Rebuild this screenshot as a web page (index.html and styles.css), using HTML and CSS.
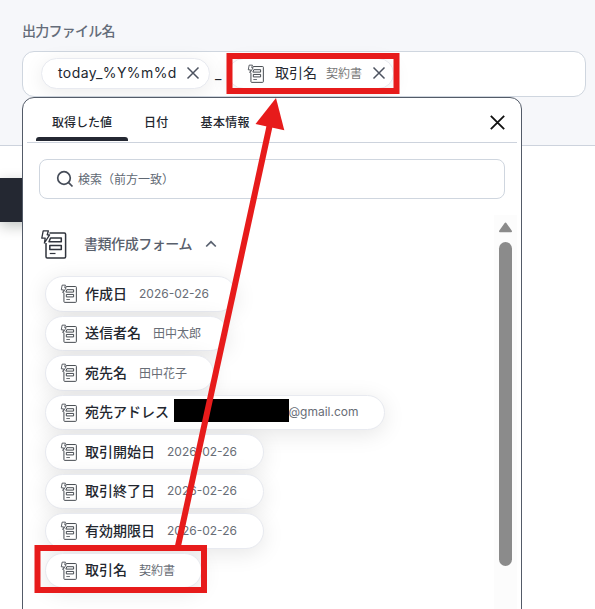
FILE: index.html
```html
<!DOCTYPE html>
<html lang="ja">
<head>
<meta charset="utf-8">
<title>出力ファイル名</title>
<link rel="stylesheet" href="styles.css">
</head>
<body>
<svg class="defs" aria-hidden="true">
  <symbol id="form" viewBox="0 0 28 30">
    <g fill="none" stroke="currentColor" stroke-width="1.5" stroke-linejoin="round">
      <path d="M9.5 4H24.4Q25.6 4 25.6 5.2V27.8Q25.6 29 24.4 29H7.2Q6 29 6 27.8V14"/>
      <path d="M3.2 1.8H8.4L7.2 5.800H9.6L4.4 14L5.200 9.200H1.8Z" stroke-width="1.3"/>
      <path d="M10.5 9H21.3V12.8H9ZM9.8 16.5H21.3V20.4H9.8Z"/>
      <path d="M9.8 24.5H15.5" stroke-width="1.2"/>
    </g>
  </symbol>
  <symbol id="cross" viewBox="0 0 14 14"><path d="M1.5 1.5L12.5 12.5M12.5 1.5L1.5 12.5" fill="none" stroke="currentColor" stroke-width="1.5"/></symbol>
</svg>
<main class="page">
  <section class="top">
    <div class="field-label">出力ファイル名</div>
    <div class="field">
      <div class="chip chip-date"><span>today_%Y%m%d</span><svg class="x"><use href="#cross"/></svg></div>
      <span class="sep">_</span>
      <div class="chip chip-deal"><svg class="icon"><use href="#form"/></svg><span class="chip-name">取引名</span><span class="chip-value">契約書</span><svg class="x"><use href="#cross"/></svg></div>
    </div>
  </section>
  <div class="button"></div>

  <div class="popup">
    <header class="tabs">
      <div class="tab active">取得した値</div>
      <div class="tab">日付</div>
      <div class="tab">基本情報</div>
      <svg class="close"><use href="#cross"/></svg>
    </header>
    <div class="search">
      <svg class="glass" viewBox="0 0 18 18"><circle cx="8" cy="8" r="6.3"/><path d="M12.6 12.6L16.5 16.5"/></svg>
      <span>検索（前方一致）</span>
    </div>
    <div class="body">
      <div class="list">
        <div class="group">
          <svg class="group-icon"><use href="#form"/></svg>
          <span>書類作成フォーム</span>
          <svg class="chevron" viewBox="0 0 12 8"><path d="M1.2 6.5L6 1.8L10.8 6.5"/></svg>
        </div>
        <div class="pill"><svg class="icon"><use href="#form"/></svg><b>作成日</b><span>2026-02-26</span></div>
        <div class="pill"><svg class="icon"><use href="#form"/></svg><b>送信者名</b><span>田中太郎</span></div>
        <div class="pill"><svg class="icon"><use href="#form"/></svg><b>宛先名</b><span>田中花子</span></div>
        <div class="pill mail"><svg class="icon"><use href="#form"/></svg><b>宛先アドレス</b><i class="mask"></i><span>@gmail.com</span></div>
        <div class="pill"><svg class="icon"><use href="#form"/></svg><b>取引開始日</b><span>2026-02-26</span></div>
        <div class="pill"><svg class="icon"><use href="#form"/></svg><b>取引終了日</b><span>2026-02-26</span></div>
        <div class="pill"><svg class="icon"><use href="#form"/></svg><b>有効期限日</b><span>2026-02-26</span></div>
        <div class="pill"><svg class="icon"><use href="#form"/></svg><b>取引名</b><span>契約書</span></div>
      </div>
      <div class="scroll">
        <svg class="up" viewBox="0 0 15 11"><path d="M7.5 1.5L13 9.3H2Z"/></svg>
        <div class="thumb"></div>
      </div>
    </div>
  </div>

  <svg class="marks" viewBox="0 0 595 609">
    <rect x="229.5" y="56" width="167" height="35"/>
    <rect x="37.5" y="548" width="166.5" height="42"/>
    <path d="M178 546L270 124"/>
    <path class="head" d="M276 98L284.3 130.3L255.5 124Z"/>
  </svg>
</main>
</body>
</html>
```
FILE: styles.css
```css
* { box-sizing: border-box; }
body {
  margin: 0;
  background: #fff;
  color: #23272f;
  font-family: Inter, "Noto Sans CJK JP", sans-serif;
}
svg { display: block; flex: none; }
.defs { position: absolute; width: 0; height: 0; }
.page { position: relative; height: 609px; overflow: hidden; }

.top {
  height: 146px;
  padding: 20px 9px 0 22px;
  background: #f6f7fa;
  border-bottom: 1px solid #cdd3dd;
}
.field-label {
  height: 31px;
  line-height: 21px;
  font-size: 14px;
  letter-spacing: -0.75px;
  font-weight: 500;
  color: #646c79;
}
.field {
  display: flex;
  align-items: center;
  height: 46px;
  padding: 0 18px 2px;
  background: #fff;
  border: 1px solid #cfd6df;
  border-radius: 12px;
}
.chip {
  display: flex;
  align-items: center;
  height: 31px;
  background: #fff;
  border: 1px solid #e8eaf0;
  border-radius: 16px;
  box-shadow: 0 4px 20px rgba(0, 0, 0, 0.08);
  font-size: 14px;
  white-space: nowrap;
}
.chip span { margin-bottom: 2px; }
.chip-date { width: 169px; padding-left: 16px; letter-spacing: 0.42px; }
.chip-date .x { margin: 0 9px 0 auto; }
.sep { width: 18px; padding-left: 5px; font-size: 14px; }
.chip-deal { width: 166px; padding-left: 18px; }
.chip-deal .chip-name { margin-left: 10px; }
.chip-deal .chip-value { margin-left: 9px; font-size: 12px; color: #7a7a7a; }
.chip-deal .x { margin-left: 10px; }
.x { width: 14px; height: 14px; color: #4d5360; }
.icon { width: 18px; height: 19px; color: #3c4148; }

.button {
  width: 60px;
  height: 44px;
  margin-top: 32px;
  background: #242832;
  box-shadow: 0 4px 14px rgba(0, 20, 10, 0.25);
}

.popup {
  position: absolute;
  left: 22px;
  top: 97px;
  width: 500px;
  height: 530px;
  padding: 0 4px;
  background: #fff;
  border: 1px solid #535b68;
  border-radius: 12px;
}
.tabs {
  display: flex;
  height: 45px;
  padding-left: 9px;
  border-bottom: 1px solid #cdd3dd;
  font-size: 12px;
  font-weight: 500;
  line-height: 50px;
}
.tab { padding: 0 16px; }
.tab + .tab { letter-spacing: 0.3px; }
.tab.active {
  position: relative;
  width: 92px;
  padding: 0;
  text-align: center;
}
.tab.active::after {
  content: "";
  position: absolute;
  left: 0;
  bottom: 1px;
  width: 92px;
  height: 4px;
  background: #242832;
  border-radius: 3px 3px 0 0;
}
.close { width: 17px; height: 17px; margin: 16px 11.5px 0 auto; color: #111; }
.search {
  display: flex;
  align-items: center;
  width: 466px;
  height: 40px;
  margin: 16px 0 0 12px;
  padding-left: 16px;
  border: 1px solid #cfd6df;
  border-radius: 8px;
  font-size: 12px;
  color: #606873;
}
.search span { margin-bottom: 1px; }
.glass { width: 18px; height: 18px; margin-right: 4px; fill: none; stroke: #454c58; stroke-width: 1.7; }
.body { display: flex; margin-top: 16px; height: 400px; }
.list { display: flex; flex-direction: column; align-items: flex-start; width: 467px; padding-left: 18px; }
.group {
  display: flex;
  align-items: center;
  height: 57px;
  margin-bottom: 4px;
  font-size: 14px;
  font-weight: 500;
  color: #59606c;
  letter-spacing: -0.45px;
}
.group span { margin-bottom: 2px; }
.group-icon { width: 28px; height: 30px; margin: 0 16px 0 -5px; color: #30343d; }
.chevron { width: 12px; height: 8px; margin-left: 13px; fill: none; stroke: #5a6270; stroke-width: 1.7; }
.pill {
  display: flex;
  align-items: center;
  height: 35.5px;
  margin-bottom: 4px;
  padding: 0 26px 0 14px;
  background: #fff;
  border: 1px solid #e8eaf0;
  border-radius: 18px;
  box-shadow: 0 4px 22px rgba(0, 0, 0, 0.1);
  white-space: nowrap;
}
.pill b { margin: 0 0 2px 7px; font-size: 14px; font-weight: 500; }
.pill span { margin: 0 0 1px 12px; font-size: 12px; color: #686d76; }
.pill.mail { padding-right: 25.5px; }
.mask { width: 115px; height: 23px; margin: -3px 0 0 5px; background: #000; }
.pill.mail span { margin-left: -0.5px; }
.scroll { width: 23px; padding-top: 4px; background: #fcfcfc; }
.up { width: 15px; height: 11px; margin: 3px 0 0 4px; fill: #8b8b8b; stroke: #8b8b8b; stroke-width: 2; stroke-linejoin: round; }
.thumb { width: 13px; height: 324px; margin: 9px 0 0 5px; background: #8b8b8b; border-radius: 7px; }

.marks { position: absolute; left: 0; top: 0; width: 595px; height: 609px; fill: none; stroke: #e71b1b; stroke-width: 6; }
.marks .head { fill: #e71b1b; stroke: none; }
```
